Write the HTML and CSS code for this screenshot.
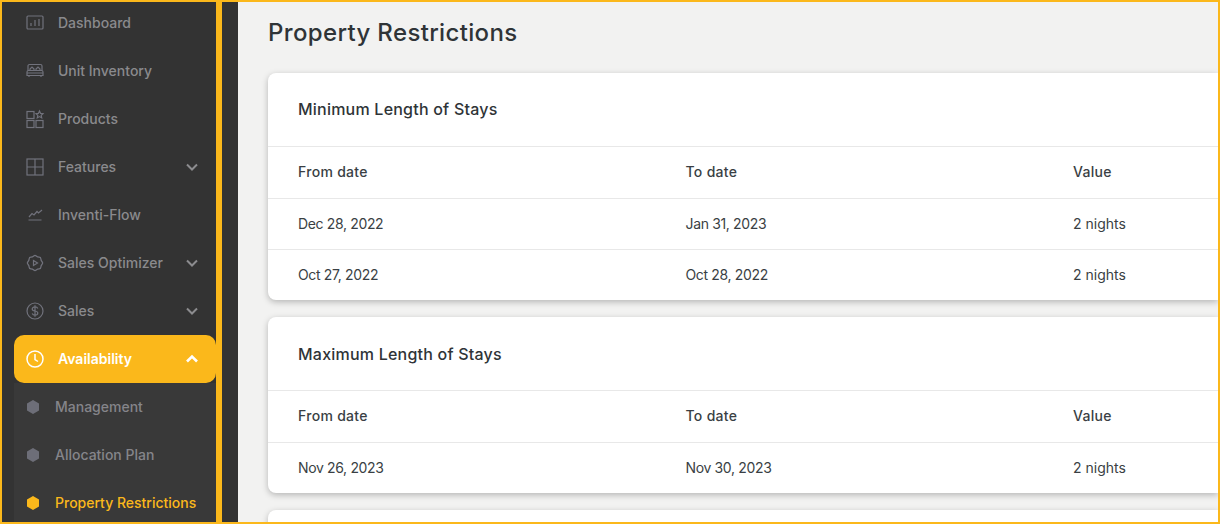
FILE: index.html
```html
<!DOCTYPE html>
<html lang="en">
<head>
    <meta charset="UTF-8">
    <title>Property Restrictions</title>
    <link rel="stylesheet" href="styles.css">
</head>
<body>
    <div class="frame">
        <aside class="sidebar">
            <a class="nav-item">
                <svg class="nav-icon" viewBox="0 0 20 20"><rect x="2" y="3" width="16" height="13" rx="1"/><path d="M6 13v-3M10 13V7M14 13V6"/></svg>
                <span class="nav-label">Dashboard</span>
            </a>
            <a class="nav-item">
                <svg class="nav-icon" viewBox="0 0 20 20"><path d="M3 9.500V5a1.500 1.500 0 0 1 1.500-1.500h11A1.500 1.500 0 0 1 17 5v4.500M2 14.500v-3.500a1.500 1.500 0 0 1 1.500-1.500h13A1.500 1.500 0 0 1 18 11v3.500zM2 12h16M4 14.500v1.500M16 14.500v1.500M5 9.500V8l2-2 2 2v1.500M11 9.500V8l2-2 2 2v1.500"/></svg>
                <span class="nav-label">Unit Inventory</span>
            </a>
            <a class="nav-item">
                <svg class="nav-icon" viewBox="0 0 20 20"><rect x="2" y="2.500" width="7" height="7"/><rect x="2" y="11.500" width="7" height="7"/><rect x="11" y="11.500" width="7" height="7"/><path d="M14.500 2l1.100 2.400 2.400.3-1.800 1.700.5 2.500-2.200-1.300-2.200 1.300.5-2.500L11 4.700l2.400-.3z"/></svg>
                <span class="nav-label">Products</span>
            </a>
            <a class="nav-item">
                <svg class="nav-icon" viewBox="0 0 20 20"><rect x="2" y="2" width="16" height="16"/><path d="M10 2v16M2 10h16"/></svg>
                <span class="nav-label">Features</span>
                <svg class="chevron" viewBox="0 0 14 10"><path d="M2 2.500l5 5 5-5"/></svg>
            </a>
            <a class="nav-item">
                <svg class="nav-icon" viewBox="0 0 20 20"><path d="M4 12l3-3.500 2 1.500 3-3.500 1.500 1.500L17 5M3.500 15h13"/></svg>
                <span class="nav-label">Inventi-Flow</span>
            </a>
            <a class="nav-item">
                <svg class="nav-icon" viewBox="0 0 20 20"><path d="M8.780 2.950Q10 1.800 11.220 2.950Q12.450 4.090 14.120 4.150Q15.800 4.200 15.850 5.880Q15.910 7.550 17.050 8.780Q18.200 10 17.050 11.220Q15.910 12.450 15.850 14.120Q15.800 15.800 14.120 15.850Q12.450 15.910 11.220 17.050Q10 18.200 8.780 17.050Q7.550 15.910 5.880 15.850Q4.200 15.800 4.150 14.120Q4.090 12.450 2.950 11.220Q1.800 10 2.950 8.780Q4.090 7.550 4.150 5.880Q4.200 4.200 5.880 4.150Q7.550 4.090 8.780 2.950z"/><path d="M8.500 7.500l4 2.500-4 2.500z"/></svg>
                <span class="nav-label">Sales Optimizer</span>
                <svg class="chevron" viewBox="0 0 14 10"><path d="M2 2.500l5 5 5-5"/></svg>
            </a>
            <a class="nav-item">
                <svg class="nav-icon" viewBox="0 0 20 20"><circle cx="10" cy="10" r="8"/><path d="M12.800 7.500c-.4-1-1.500-1.700-2.800-1.700-1.600 0-2.800.9-2.800 2.100s1.200 1.800 2.800 2.100 2.800.9 2.800 2.100-1.200 2.100-2.800 2.100c-1.300 0-2.400-.7-2.800-1.700M10 4.300v11.400"/></svg>
                <span class="nav-label">Sales</span>
                <svg class="chevron" viewBox="0 0 14 10"><path d="M2 2.500l5 5 5-5"/></svg>
            </a>
            <a class="nav-item active">
                <svg class="nav-icon" viewBox="0 0 20 20"><circle cx="10" cy="10" r="8"/><path d="M10 5v5.500l3 2"/></svg>
                <span class="nav-label">Availability</span>
                <svg class="chevron" viewBox="0 0 14 10"><path d="M2 7.500l5-5 5 5"/></svg>
            </a>
            <div class="submenu">
                <a class="sub-item">
                    <svg class="hex" viewBox="0 0 12 14"><path d="M6 0l6 3.500v7L6 14l-6-3.500v-7z"/></svg>
                    <span>Management</span>
                </a>
                <a class="sub-item">
                    <svg class="hex" viewBox="0 0 12 14"><path d="M6 0l6 3.500v7L6 14l-6-3.500v-7z"/></svg>
                    <span>Allocation Plan</span>
                </a>
                <a class="sub-item current">
                    <svg class="hex" viewBox="0 0 12 14"><path d="M6 0l6 3.500v7L6 14l-6-3.500v-7z"/></svg>
                    <span>Property Restrictions</span>
                </a>
            </div>
        </aside>
        <main class="main">
            <h1 class="page-title">Property Restrictions</h1>
            <section class="card">
                <h2 class="card-title">Minimum Length of Stays</h2>
                <div class="row head"><div>From date</div><div>To date</div><div>Value</div></div>
                <div class="row"><div class="date">Dec 28, 2022</div><div class="date">Jan 31, 2023</div><div>2 nights</div></div>
                <div class="row"><div class="date">Oct 27, 2022</div><div class="date">Oct 28, 2022</div><div>2 nights</div></div>
            </section>
            <section class="card">
                <h2 class="card-title">Maximum Length of Stays</h2>
                <div class="row head"><div>From date</div><div>To date</div><div>Value</div></div>
                <div class="row"><div class="date">Nov 26, 2023</div><div class="date">Nov 30, 2023</div><div>2 nights</div></div>
            </section>
            <section class="card"></section>
        </main>
    </div>
</body>
</html>
```

FILE: styles.css
```css
html, body {
    margin: 0;
    height: 100%;
}
body {
    font-family: Inter, "Noto Sans", sans-serif;
    background-color: #f2f2f1;
    overflow: hidden;
}
.frame {
    box-sizing: border-box;
    display: flex;
    height: 524px;
    border: 2px solid #fbb81b;
    overflow: hidden;
}
.sidebar {
    flex: 0 0 214px;
    height: 560px;
    margin-top: -3px;
    background-color: #333333;
    border-right: 6px solid #fbb81b;
    box-shadow: 16px 0 0 #333333;
}
.nav-item {
    display: flex;
    align-items: center;
    height: 48px;
    padding: 0 17px 0 22.5px;
    color: #8a8a8d;
    font-size: 14px;
    font-weight: 500;
}
.nav-icon {
    width: 20px;
    height: 20px;
    margin-right: 13.5px;
    fill: none;
    stroke: #71727c;
    stroke-width: 1.2;
}
.nav-label {
    flex: 1;
    padding-bottom: 2px;
}
.chevron {
    width: 14px;
    height: 10px;
    fill: none;
    stroke: #8c8c8f;
    stroke-width: 2;
}
.nav-item.active {
    margin-left: 12px;
    padding-left: 10.5px;
    border-radius: 10px;
    background-color: #fbb81b;
    color: #ffffff;
    font-weight: 600;
}
.active .nav-icon, .active .chevron {
    stroke: #ffffff;
}
.active .nav-icon {
    stroke-width: 1.5;
}
.active .chevron {
    stroke-width: 2.6;
}
.submenu {
    margin-left: 12px;
    background-color: #393939;
}
.sub-item {
    display: flex;
    align-items: center;
    height: 46px;
    padding: 0 0 2px 13px;
    color: #85858a;
    font-size: 14px;
    font-weight: 500;
}
.hex {
    width: 12px;
    height: 14px;
    margin: 2px 16px 0 0;
    fill: #6d6e78;
}
.sub-item.current {
    color: #fbb81b;
}
.current .hex {
    fill: #fbb81b;
}
.main {
    flex: 1;
    min-width: 0;
    padding-left: 46px;
}
.page-title {
    margin: 0;
    height: 71px;
    padding-top: 15px;
    box-sizing: border-box;
    font-size: 24px;
    font-weight: 500;
    line-height: 32px;
    letter-spacing: 0.35px;
    color: #2f3437;
}
.card {
    background-color: #ffffff;
    border-radius: 8px 0 0 8px;
    box-shadow: 0 2px 6px rgba(0, 0, 0, 0.25);
    margin-bottom: 17px;
    min-height: 40px;
}
.card-title {
    margin: 0;
    height: 73px;
    padding-left: 30px;
    font-size: 16px;
    font-weight: 500;
    line-height: 73px;
    letter-spacing: 0.22px;
    color: #2f3437;
}
.card + .card .card-title {
    height: 72px;
    padding-top: 1px;
}
.row {
    display: grid;
    grid-template-columns: repeat(3, 387.5px);
    height: 48px;
    padding: 0 0 2px 30px;
    border-top: 1px solid #e8e8e8;
    align-items: center;
    font-size: 14px;
    color: #3a3f44;
}
.row.head {
    height: 49px;
    font-weight: 500;
    letter-spacing: 0.3px;
}
.date {
    letter-spacing: -0.35px;
}
```
